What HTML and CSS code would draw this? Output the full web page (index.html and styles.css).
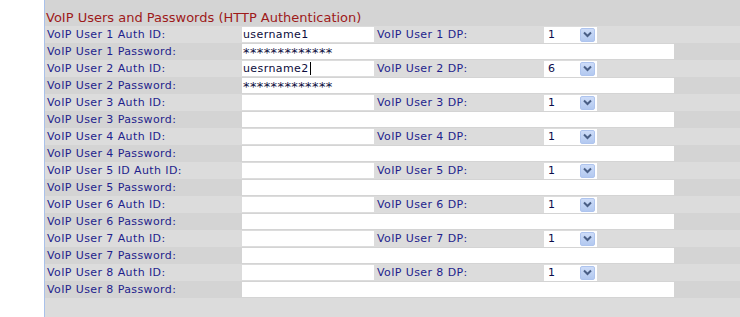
FILE: index.html
```html
<!DOCTYPE html>
<html lang="en">
<head>
  <meta charset="UTF-8" />
  <title>VoIP Users and Passwords</title>
  <link rel="stylesheet" href="styles.css">
</head>
<body>
  <div class="panel">
    <div class="title">VoIP Users and Passwords (HTTP Authentication)</div>

    <div class="row auth">
      <span class="label">VoIP User 1 Auth ID:</span>
      <span class="field short">username1</span>
      <span class="label dp">VoIP User 1 DP:</span>
      <span class="select"><span class="val">1</span><span class="btn"><svg width="13" height="13" viewBox="0 0 13 13"><path d="M3 4.5 L6.5 8 L10 4.5" fill="none" stroke="#4a5f86" stroke-width="2"/></svg></span></span>
    </div>
    <div class="row pass">
      <span class="label">VoIP User 1 Password:</span>
      <span class="field long secret">*************</span>
    </div>

    <div class="row auth">
      <span class="label">VoIP User 2 Auth ID:</span>
      <span class="field short">uesrname2<span class="caret"></span></span>
      <span class="label dp">VoIP User 2 DP:</span>
      <span class="select"><span class="val">6</span><span class="btn"><svg width="13" height="13" viewBox="0 0 13 13"><path d="M3 4.5 L6.5 8 L10 4.5" fill="none" stroke="#4a5f86" stroke-width="2"/></svg></span></span>
    </div>
    <div class="row pass">
      <span class="label">VoIP User 2 Password:</span>
      <span class="field long secret">*************</span>
    </div>

    <div class="row auth">
      <span class="label">VoIP User 3 Auth ID:</span>
      <span class="field short"></span>
      <span class="label dp">VoIP User 3 DP:</span>
      <span class="select"><span class="val">1</span><span class="btn"><svg width="13" height="13" viewBox="0 0 13 13"><path d="M3 4.5 L6.5 8 L10 4.5" fill="none" stroke="#4a5f86" stroke-width="2"/></svg></span></span>
    </div>
    <div class="row pass">
      <span class="label">VoIP User 3 Password:</span>
      <span class="field long"></span>
    </div>

    <div class="row auth">
      <span class="label">VoIP User 4 Auth ID:</span>
      <span class="field short"></span>
      <span class="label dp">VoIP User 4 DP:</span>
      <span class="select"><span class="val">1</span><span class="btn"><svg width="13" height="13" viewBox="0 0 13 13"><path d="M3 4.5 L6.5 8 L10 4.5" fill="none" stroke="#4a5f86" stroke-width="2"/></svg></span></span>
    </div>
    <div class="row pass">
      <span class="label">VoIP User 4 Password:</span>
      <span class="field long"></span>
    </div>

    <div class="row auth">
      <span class="label">VoIP User 5 ID Auth ID:</span>
      <span class="field short"></span>
      <span class="label dp">VoIP User 5 DP:</span>
      <span class="select"><span class="val">1</span><span class="btn"><svg width="13" height="13" viewBox="0 0 13 13"><path d="M3 4.5 L6.5 8 L10 4.5" fill="none" stroke="#4a5f86" stroke-width="2"/></svg></span></span>
    </div>
    <div class="row pass">
      <span class="label">VoIP User 5 Password:</span>
      <span class="field long"></span>
    </div>

    <div class="row auth">
      <span class="label">VoIP User 6 Auth ID:</span>
      <span class="field short"></span>
      <span class="label dp">VoIP User 6 DP:</span>
      <span class="select"><span class="val">1</span><span class="btn"><svg width="13" height="13" viewBox="0 0 13 13"><path d="M3 4.5 L6.5 8 L10 4.5" fill="none" stroke="#4a5f86" stroke-width="2"/></svg></span></span>
    </div>
    <div class="row pass">
      <span class="label">VoIP User 6 Password:</span>
      <span class="field long"></span>
    </div>

    <div class="row auth">
      <span class="label">VoIP User 7 Auth ID:</span>
      <span class="field short"></span>
      <span class="label dp">VoIP User 7 DP:</span>
      <span class="select"><span class="val">1</span><span class="btn"><svg width="13" height="13" viewBox="0 0 13 13"><path d="M3 4.5 L6.5 8 L10 4.5" fill="none" stroke="#4a5f86" stroke-width="2"/></svg></span></span>
    </div>
    <div class="row pass">
      <span class="label">VoIP User 7 Password:</span>
      <span class="field long"></span>
    </div>

    <div class="row auth">
      <span class="label">VoIP User 8 Auth ID:</span>
      <span class="field short"></span>
      <span class="label dp">VoIP User 8 DP:</span>
      <span class="select"><span class="val">1</span><span class="btn"><svg width="13" height="13" viewBox="0 0 13 13"><path d="M3 4.5 L6.5 8 L10 4.5" fill="none" stroke="#4a5f86" stroke-width="2"/></svg></span></span>
    </div>
    <div class="row pass">
      <span class="label">VoIP User 8 Password:</span>
      <span class="field long"></span>
    </div>
  </div>
</body>
</html>
```

FILE: styles.css
```css
* { box-sizing: border-box; }
body {
  margin: 0;
  background: #fff;
  font-family: 'DejaVu Sans', Verdana, sans-serif;
  font-size: 11px;
  letter-spacing: 0.4px;
}
.panel {
  margin-left: 44px;
  height: 317px;
  border-left: 1px solid #a9c1ea;
  background: #dcdcdc;
}
.title {
  height: 26px;
  padding: 10px 0 0 1px;
  background: #d4d4d4;
  color: #9e1a1a;
  font-size: 13px;
  line-height: 16px;
  letter-spacing: 0;
}
.row {
  display: flex;
  align-items: center;
  height: 17px;
}
.row.auth { background: #dcdcdc; }
.row.pass { background: #d4d4d4; }
.label {
  width: 197px;
  padding-left: 2px;
  color: #1e1e8c;
  line-height: 17px;
  white-space: nowrap;
}
.label.dp {
  width: 170px;
  padding-left: 3px;
}
.field {
  height: 15px;
  background: #fff;
  color: #0c0c3c;
  line-height: 15px;
  padding-left: 1px;
  white-space: nowrap;
}
.field.short { width: 132px; }
.field.long { width: 432px; }
.field.secret {
  font-size: 13px;
  line-height: 17px;
  letter-spacing: 0.4px;
}
.caret {
  display: inline-block;
  width: 1px;
  height: 13px;
  margin-left: 1px;
  vertical-align: -3px;
  background: #000;
}
.select {
  display: flex;
  align-items: center;
  width: 53px;
  height: 16px;
  background: #fff;
  padding: 1px 2px 1px 4px;
}
.select .val {
  flex: 1;
  color: #0c0c4c;
  line-height: 14px;
}
.btn {
  display: flex;
  align-items: center;
  justify-content: center;
  width: 15px;
  height: 14px;
  border: 1px solid #aec4ee;
  border-radius: 2px;
  background: linear-gradient(#cddcf8, #b3c9f0);
}
```
